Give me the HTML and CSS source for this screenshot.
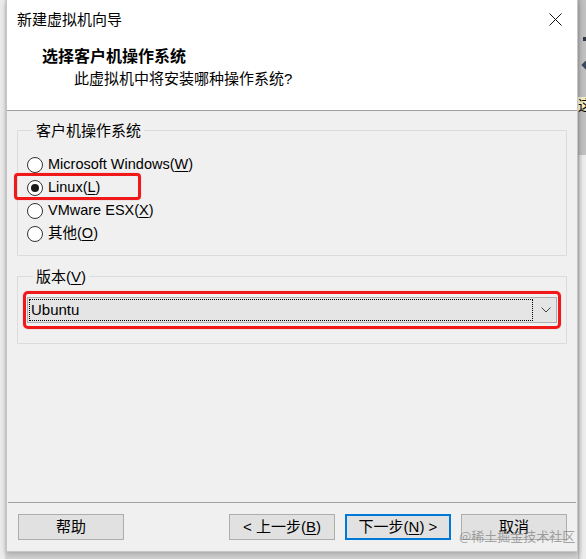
FILE: index.html
```html
<!DOCTYPE html>
<html lang="zh-CN">
<head>
<meta charset="utf-8">
<title>新建虚拟机向导</title>
<link rel="stylesheet" href="styles.css">
</head>
<body>
<div class="screen">
  <div class="dialog">
    <div class="titlebar">
      <span class="title">新建虚拟机向导</span>
      <svg class="close" width="13" height="13" viewBox="0 0 13 13"><path d="M0.5 0.5 L12.5 12.5 M12.5 0.5 L0.5 12.5" stroke="#111" stroke-width="1" fill="none"/></svg>
    </div>
    <div class="header">
      <div class="h-title">选择客户机操作系统</div>
      <div class="h-sub">此虚拟机中将安装哪种操作系统?</div>
    </div>
    <div class="content">
      <fieldset class="group group-os">
        <legend>客户机操作系统</legend>
        <div class="radio-row"><span class="radio"></span><span class="opt">Microsoft Windows(<u>W</u>)</span></div>
        <div class="radio-row marked"><span class="radio checked"></span><span class="opt">Linux(<u>L</u>)</span><span class="redbox red-linux"></span></div>
        <div class="radio-row"><span class="radio"></span><span class="opt">VMware ESX(<u>X</u>)</span></div>
        <div class="radio-row"><span class="radio"></span><span class="opt">其他(<u>O</u>)</span></div>
      </fieldset>
      <fieldset class="group group-ver">
        <legend>版本(<u>V</u>)</legend>
        <div class="combo">
          <div class="combo-focus">Ubuntu</div>
          <div class="combo-arrow"><svg width="10" height="6" viewBox="0 0 10 6"><path d="M0.5 0.5 L5 5 L9.5 0.5" stroke="#444" stroke-width="1" fill="none"/></svg></div>
          <span class="redbox red-combo"></span>
        </div>
      </fieldset>
    </div>
    <div class="footer">
      <button class="btn">帮助</button>
      <div class="spacer"></div>
      <button class="btn">&lt; 上一步(<u>B</u>)</button>
      <button class="btn btn-default">下一步(<u>N</u>) &gt;</button>
      <button class="btn">取消</button>
    </div>
    <div class="watermark">@稀土掘金技术社区</div>
  </div>
  <div class="rstrip">
    <div class="rs-top">
      <div class="rs-sq"></div>
      <div class="rs-dia"></div>
      <div class="rs-ch">这</div>
    </div>
    <div class="rs-bottom"></div>
  </div>
</div>
</body>
</html>
```
FILE: styles.css
```css
html, body {
  margin: 0;
  padding: 0;
}
body {
  background: #ececec;
  font-family: "Liberation Sans", "Noto Sans CJK SC", sans-serif;
  font-size: 15px;
  color: #000;
  width: 586px;
  height: 559px;
  overflow: hidden;
}
.screen {
  display: flex;
  height: 559px;
  padding-left: 6px;
  box-sizing: border-box;
  background: linear-gradient(90deg, #ececec 0, #ececec 4px, #d2d2d2 6px);
}
.dialog {
  position: relative;
  width: 572px;
  height: 552px;
  box-sizing: border-box;
  border: 1px solid #c6c6c6;
  border-top: none;
  background: #f0f0f0;
  display: flex;
  flex-direction: column;
  box-shadow: 0 2px 6px rgba(0,0,0,0.22);
}
.titlebar {
  height: 40px;
  background: #fff;
  display: flex;
  align-items: center;
  justify-content: space-between;
  padding: 0 15px 0 10px;
  line-height: 20px;
}
.close {
  display: block;
  margin-top: -2px;
}
.header {
  background: #fff;
  border-bottom: 1px solid #a0a0a0;
  padding-top: 6px;
  box-sizing: border-box;
  height: 71px;
}
.h-title {
  font-weight: bold;
  font-size: 16px;
  line-height: 22px;
  padding-left: 35px;
}
.h-sub {
  line-height: 22px;
  padding-left: 67px;
}
.content {
  flex: 1;
  padding: 0 10px;
}
.group {
  margin: 0;
  padding: 0;
  border: 1px solid #dcdcdc;
  min-inline-size: 0;
}
.group legend {
  margin-left: 6px;
  padding: 0 3px;
  line-height: 21px;
  font-size: 15px;
}
.group-os {
  margin-top: 9px;
  padding: 12px 0 10px 9px;
}
.group-ver {
  margin-top: 10px;
  padding: 10px 9px 20px 9px;
}
.radio-row {
  position: relative;
  display: flex;
  align-items: center;
  height: 23px;
  font-size: 14.5px;
}
.radio {
  width: 16px;
  height: 16px;
  box-sizing: border-box;
  border: 1px solid #333;
  border-radius: 50%;
  background: #fff;
  margin-right: 5px;
  display: flex;
  align-items: center;
  justify-content: center;
}
.radio.checked::after {
  content: "";
  width: 8px;
  height: 8px;
  border-radius: 50%;
  background: #1a1a1a;
}
.opt {
  line-height: 23px;
}
u {
  text-decoration: underline;
  text-underline-offset: 2px;
}
.redbox {
  position: absolute;
  box-sizing: border-box;
  border: 3px solid #f01818;
  box-shadow: 0 0 1px rgba(240,24,24,0.6);
  pointer-events: none;
}
.red-linux {
  left: -13px;
  top: -3px;
  width: 127px;
  height: 27px;
  border-radius: 4px;
}
.combo {
  position: relative;
  height: 26px;
  box-sizing: border-box;
  border: 1px solid #adadad;
  background: #e5e5e5;
  display: flex;
  padding: 1px;
}
.combo-focus {
  width: 504px;
  box-sizing: border-box;
  border: 1px dotted #000;
  padding-left: 1px;
  line-height: 20px;
  font-size: 15px;
}
.combo-arrow {
  flex: 1;
  display: flex;
  align-items: center;
  justify-content: center;
}
.combo-arrow svg {
  display: block;
  margin-left: 4px;
}
.red-combo {
  left: -5px;
  right: -5px;
  top: -7px;
  bottom: -7px;
  border-radius: 5px;
}
.footer {
  margin: 0 1px 0 1px;
  border-top: 1px solid #a0a0a0;
  height: 49px;
  box-sizing: border-box;
  padding: 11px 9px 0 10px;
  display: flex;
  gap: 10px;
}
.spacer {
  flex: 1;
}
.btn {
  width: 106px;
  height: 26px;
  box-sizing: border-box;
  border: 1px solid #adadad;
  background: #e1e1e1;
  font-family: "Liberation Sans", "Noto Sans CJK SC", sans-serif;
  font-size: 15px;
  color: #000;
  padding: 0;
  margin: 0;
  line-height: 22px;
}
.btn-default {
  border: 2px solid #0078d7;
}
.watermark {
  position: absolute;
  left: 452px;
  top: 527px;
  font-size: 13px;
  line-height: 18px;
  color: rgba(110,110,110,0.6);
  font-family: "Noto Sans CJK SC", sans-serif;
  white-space: nowrap;
}
.rstrip {
  width: 8px;
  display: flex;
  flex-direction: column;
}
.rs-top {
  height: 155px;
  background: linear-gradient(90deg, #a8a8a8 0, #bcbcbc 3px, #c2c2c2 8px);
  overflow: hidden;
}
.rs-sq {
  width: 3px;
  height: 4px;
  background: #2f3a44;
  margin: 37px 0 0 5px;
}
.rs-dia {
  width: 8px;
  height: 8px;
  background: #37495a;
  transform: rotate(45deg);
  margin: 20px 0 0 5px;
}
.rs-ch {
  margin-top: 28px;
  width: 14px;
  font-size: 14px;
  line-height: 14px;
  font-family: "Noto Sans CJK SC", sans-serif;
  background: #f2efc8;
  color: #000;
}
.rs-bottom {
  flex: 1;
  background: linear-gradient(90deg, #b0b0b0 0, #d9d9d9 2px, #ececec 5px);
}
```
